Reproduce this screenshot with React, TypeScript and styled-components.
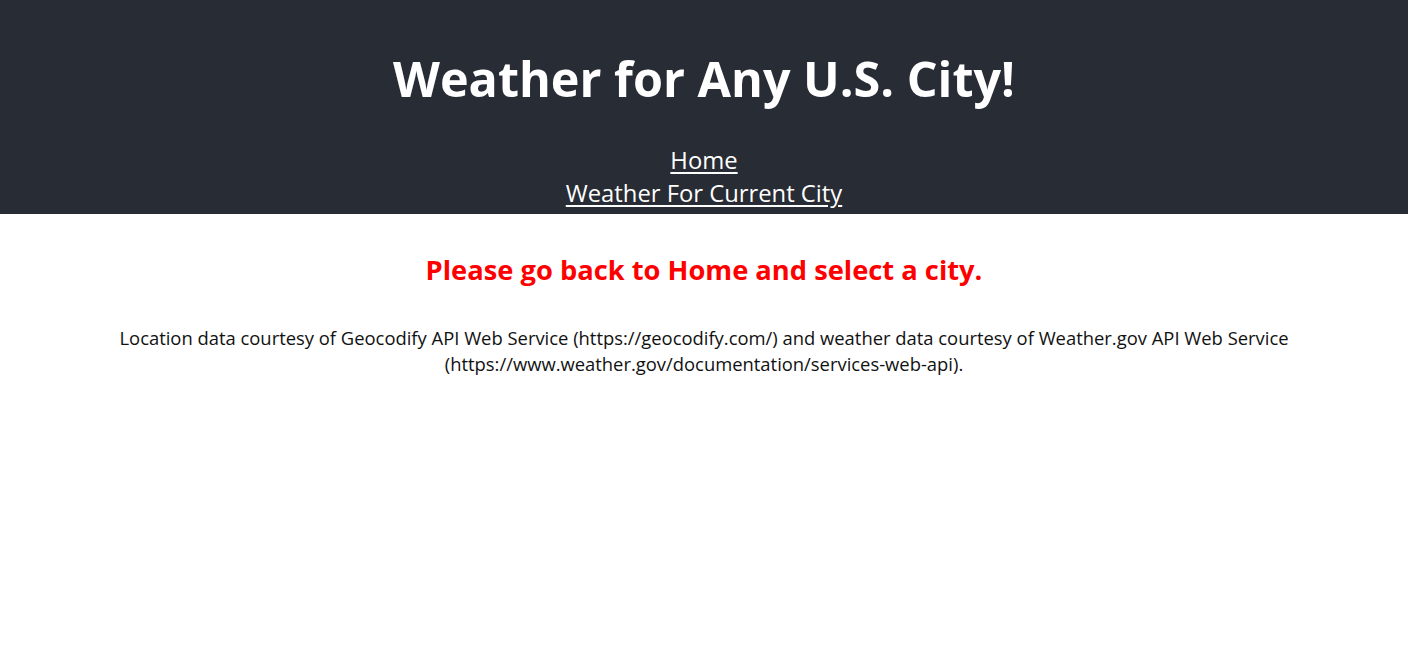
import React from "react";
import styled, { createGlobalStyle } from "styled-components";

const Global = createGlobalStyle`
  html, body { margin: 0; padding: 0; background: #ffffff; }
  body { font-family: "Open Sans", "Noto Sans", sans-serif; }
`;

const Header = styled.header`
  background: #282c34;
  color: #ffffff;
  display: flex;
  flex-direction: column;
  align-items: center;
  padding: 46px 0 6px;
  height: 214px;
  box-sizing: border-box;
`;

const Title = styled.h1`
  margin: 0 0 34px;
  font-size: 48.5px;
  font-weight: 700;
  line-height: 64px;
`;

const Nav = styled.nav`
  display: flex;
  flex-direction: column;
  align-items: center;
`;

const NavLink = styled.a`
  color: #ffffff;
  font-size: 23.8px;
  line-height: 33px;
  text-decoration: underline;
  text-underline-offset: 3px;
`;

const Main = styled.main`
  display: flex;
  flex-direction: column;
  align-items: center;
  padding: 0 100px;
`;

const Notice = styled.h2`
  margin: 36px 0 0;
  color: #ff0000;
  font-size: 27.3px;
  font-weight: 700;
  line-height: 40px;
`;

const Credits = styled.p`
  margin: 35px 0 0;
  color: #111111;
  font-size: 18.4px;
  line-height: 26px;
  text-align: center;
`;

export default function App() {
  return (
    <>
      <Global />
      <Header>
        <Title>Weather for Any U.S. City!</Title>
        <Nav>
          <NavLink href="#">Home</NavLink>
          <NavLink href="#">Weather For Current City</NavLink>
        </Nav>
      </Header>
      <Main>
        <Notice>Please go back to Home and select a city.</Notice>
        <Credits>
          Location data courtesy of Geocodify API Web Service (https://geocodify.com/) and weather data courtesy of
          Weather.gov API Web Service (https://www.weather.gov/documentation/services-web-api).
        </Credits>
      </Main>
    </>
  );
}
